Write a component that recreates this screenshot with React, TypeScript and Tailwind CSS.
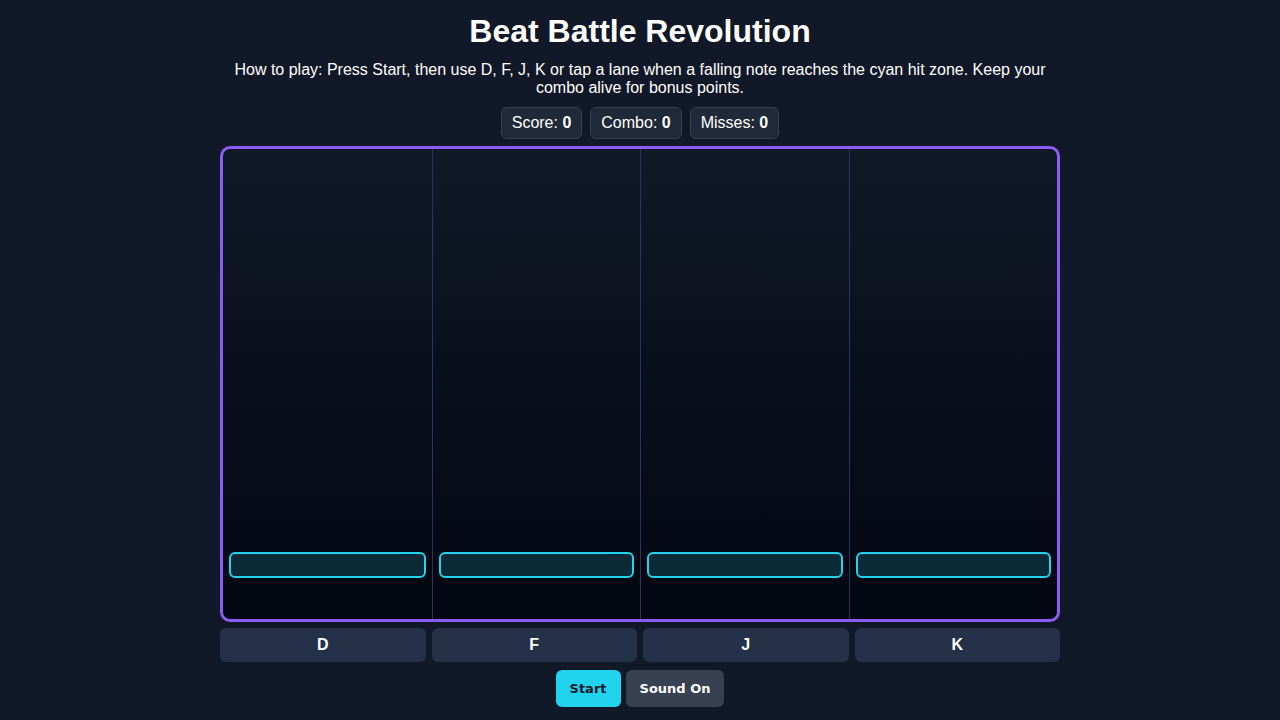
import { useState } from "react";

const lanes = ["D", "F", "J", "K"];

export default function App() {
  const [score] = useState(0);
  const [combo] = useState(0);
  const [misses] = useState(0);
  const [sound, setSound] = useState(true);

  return (
    <div className="min-h-screen bg-[#111827] text-white flex flex-col items-center" style={{ fontFamily: '"Liberation Sans", Arial, sans-serif' }}>
      <h1 className="mt-3 text-[32px] leading-[38px] font-bold">Beat Battle Revolution</h1>

      <p className="mt-[11px] w-[840px] text-center text-base leading-[18px]">
        How to play: Press Start, then use D, F, J, K or tap a lane when a falling note reaches the cyan hit zone. Keep your combo alive for bonus points.
      </p>

      <div className="mt-[10px] flex gap-2">
        <Stat label="Score" value={score} />
        <Stat label="Combo" value={combo} />
        <Stat label="Misses" value={misses} />
      </div>

      <div className="mt-[7px] w-[840px] h-[476px] border-[3px] border-[#8b5cf6] rounded-[10px] overflow-hidden bg-gradient-to-b from-[#111827] to-[#030712] grid grid-cols-4">
        {lanes.map((k, i) => (
          <div key={k} className={`flex flex-col justify-end px-[6px] pb-[41px] ${i > 0 ? "border-l border-[#2b3654]" : ""}`}>
            <div className="h-[26px] rounded-md border-2 border-[#22d3ee] bg-[#0b2a38]" />
          </div>
        ))}
      </div>

      <div className="mt-[6px] w-[840px] grid grid-cols-4 gap-[6px]">
        {lanes.map((k) => (
          <button key={k} className="h-[34px] rounded-md bg-[#253049] text-base font-bold text-white">
            {k}
          </button>
        ))}
      </div>

      <div className="mt-2 flex gap-[5px]" style={{ fontFamily: '"DejaVu Sans", sans-serif' }}>
        <button className="h-[37px] px-[14px] rounded-md bg-[#22d3ee] text-[13px] font-bold text-[#0f172a]">Start</button>
        <button onClick={() => setSound(!sound)} className="h-[37px] px-[14px] rounded-md bg-[#374151] text-[13px] font-bold text-white">
          {sound ? "Sound On" : "Sound Off"}
        </button>
      </div>
    </div>
  );
}

function Stat({ label, value }: { label: string; value: number }) {
  return (
    <div className="px-[10px] py-[6px] leading-[18px] text-base rounded-md border border-[#374151] bg-[#1f2937]">
      {label}: <b>{value}</b>
    </div>
  );
}
